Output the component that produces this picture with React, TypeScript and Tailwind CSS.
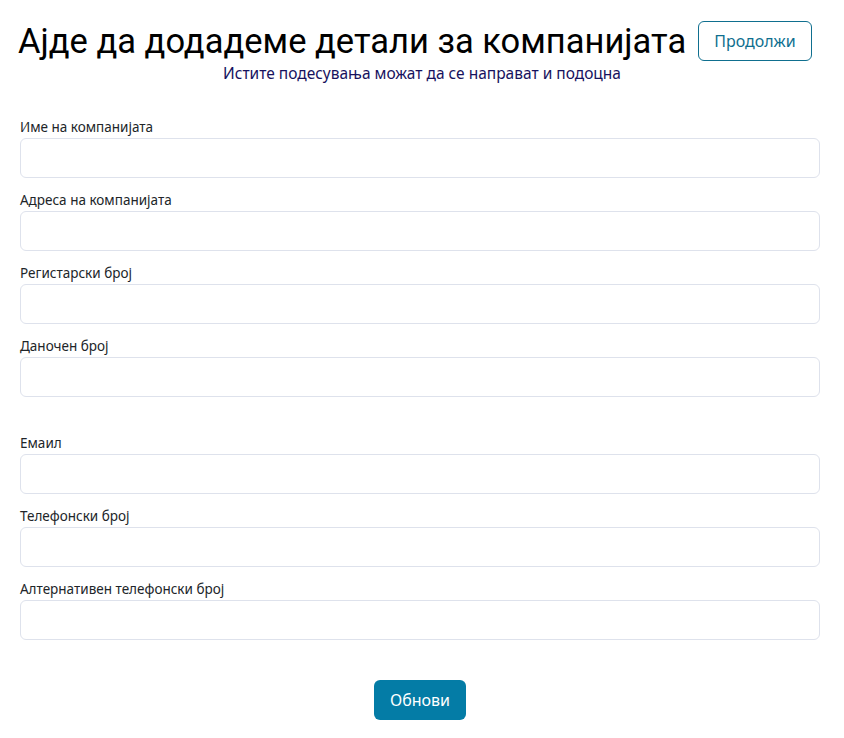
export default function App() {
  const top = ["Име на компанијата", "Адреса на компанијата", "Регистарски број", "Даночен број"];
  const bottom = ["Емаил", "Телефонски број", "Алтернативен телефонски број"];

  const Field = ({ label }: { label: string }) => (
    <div className="flex flex-col">
      <label className="block text-[13.5px] leading-[19px] mb-[1px] text-[#212529]">{label}</label>
      <input
        type="text"
        className="h-[40px] w-full rounded-[6px] border border-[#dee2ec] bg-white px-3 outline-none"
      />
    </div>
  );

  return (
    <div className="min-h-[738px] w-full bg-white font-['Noto_Sans',sans-serif]">
      <div className="flex items-center pl-[18px] pt-[20px] gap-3">
        <h1 className="font-['Roboto',sans-serif] text-[34.5px] leading-[42px] text-black">
          Ајде да додадеме детали за компанијата
        </h1>
        <button className="h-[40px] px-[15px] rounded-[6px] border border-[#0f6f8f] text-[#0f6f8f] text-[16px]">
          Продолжи
        </button>
      </div>
      <p className="text-center text-[15.5px] leading-[20px] text-[#17125e] mt-[1px]">
        Истите подесувања можат да се направат и подоцна
      </p>

      <div className="pl-5 pr-6 mt-[35px] flex flex-col gap-[13px]">
        {top.map((l) => (
          <Field key={l} label={l} />
        ))}
      </div>
      <div className="pl-5 pr-6 mt-[37px] flex flex-col gap-[13px]">
        {bottom.map((l) => (
          <Field key={l} label={l} />
        ))}
      </div>

      <div className="flex justify-center pr-[4px] mt-[40px]">
        <button className="h-[40px] w-[92px] rounded-[6px] bg-[#047ca6] text-white text-[16px]">
          Обнови
        </button>
      </div>
    </div>
  );
}
